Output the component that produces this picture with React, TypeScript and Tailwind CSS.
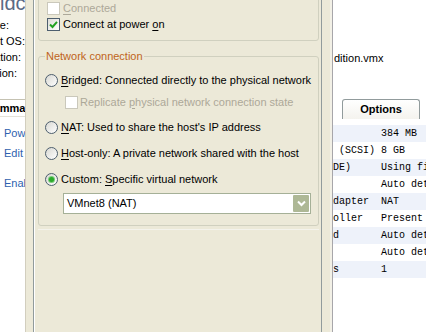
import React from "react";

const font = { fontFamily: "Tahoma, 'Liberation Sans', Arial, sans-serif" };

function Check({ checked = false, disabled = false }: { checked?: boolean; disabled?: boolean }) {
  return (
    <span
      className={
        "flex h-[13px] w-[13px] shrink-0 items-center justify-center border " +
        (disabled ? "border-[#CAC8BB] bg-white" : "border-[#4D5E6E] bg-gradient-to-br from-[#DCDCD7] to-white")
      }
    >
      {checked && (
        <svg width="9" height="9" viewBox="0 0 9 9">
          <path d="M1 4.5 L3.5 7 L8 1.8" fill="none" stroke="#21A121" strokeWidth="2" />
        </svg>
      )}
    </span>
  );
}

function Radio({ checked = false }: { checked?: boolean }) {
  return (
    <span className="flex h-[13px] w-[13px] shrink-0 items-center justify-center rounded-full border border-[#4D5E6E] bg-gradient-to-br from-[#D8D8D2] to-white">
      {checked && <span className="h-[5px] w-[5px] rounded-full bg-[#2BAA2B] shadow-[0_0_0_1px_#7ACB7A]" />}
    </span>
  );
}

function U({ children }: { children: React.ReactNode }) {
  return <span className="underline underline-offset-2">{children}</span>;
}

const rows = [
  ["Memory", "384 MB"],
  ["Hard Disk (SCSI)", "8 GB"],
  ["CD-ROM (IDE)", "Using file"],
  ["Floppy", "Auto detect"],
  ["Network Adapter", "NAT"],
  ["USB Controller", "Present"],
  ["Sound Card", "Auto detect"],
  ["Display", "Auto detect"],
  ["Processors", "1"],
];

export default function App() {
  return (
    <div className="flex h-[332px] w-[426px] overflow-hidden bg-white text-[11px] text-black" style={font}>
      {/* main window, left side */}
      <div className="w-[25px] shrink-0 overflow-hidden bg-white">
        <div className="mt-[-7px] h-[20px] whitespace-nowrap text-[20px] leading-[20px] text-[#5B6B86]">idc</div>
        <div className="mt-[4px] flex flex-col">
          <div className="flex h-[16px] w-[9px] items-center justify-end overflow-hidden whitespace-nowrap">State:</div>
          <div className="flex h-[16px] w-[25px] items-center justify-end overflow-hidden whitespace-nowrap">Guest OS:</div>
          <div className="flex h-[16px] w-[21px] items-center justify-end overflow-hidden whitespace-nowrap">Location:</div>
          <div className="flex h-[16px] w-[17px] items-center justify-end overflow-hidden whitespace-nowrap">Version:</div>
        </div>
        <div className="mt-[18px] flex h-[18px] items-center border-y border-t-[#C5C2B2] border-b-[#E4E2D8]">
          <span className="ml-[-15px] whitespace-nowrap font-bold">Commands</span>
        </div>
        <div className="flex flex-col pl-[4px] text-[#2E5FAE]">
          <div className="mt-[9px] h-[14px] whitespace-nowrap leading-[14px]">Power on this virtual machine</div>
          <div className="mt-[6px] h-[14px] whitespace-nowrap leading-[14px]">Edit virtual machine settings</div>
          <div className="mt-[16px] h-[14px] whitespace-nowrap leading-[14px]">Enable shared folders</div>
        </div>
      </div>

      {/* dialog */}
      <div className="flex w-[307px] shrink-0 border-l border-[#D2CEBE] bg-[#ECE9D8] pl-[7px]">
        <div className="w-[289px] shrink-0 border-x border-[#919B9C] shadow-[inset_1px_0_0_#FFFFFF] pl-[4px]">
          {/* device status */}
          <div className="mt-[-30px] w-[281px] rounded-[3px] border border-[#D0D0BF] pb-[8px] pl-[8px] pt-[29px]">
            <div className="flex h-[16px] items-center gap-[3px] text-[#ACA899]">
              <Check disabled />
              <span>
                <U>C</U>onnected
              </span>
            </div>
            <div className="flex h-[16px] items-center gap-[3px]">
              <Check checked />
              <span>
                Connect at power <U>o</U>n
              </span>
            </div>
          </div>

          {/* network connection */}
          <div className="relative mt-[15px] w-[281px] rounded-[3px] border border-[#D0D0BF] pb-[11px] pl-[6px] pt-[15px]">
            <span className="absolute left-[6px] top-[-8px] bg-[#ECE9D8] px-[1px] leading-[14px] text-[#BF6420]">
              Network connection
            </span>
            <div className="flex h-[16px] items-center gap-[3px]">
              <Radio />
              <span className="whitespace-nowrap">
                <U>B</U>ridged: Connected directly to the physical network
              </span>
            </div>
            <div className="mt-[6px] flex h-[16px] items-center gap-[2px] pl-[20px] text-[#ACA899]">
              <Check disabled />
              <span className="whitespace-nowrap">
                Replicate <U>p</U>hysical network connection state
              </span>
            </div>
            <div className="mt-[9px] flex h-[16px] items-center gap-[3px]">
              <Radio />
              <span className="whitespace-nowrap">
                <U>N</U>AT: Used to share the host's IP address
              </span>
            </div>
            <div className="mt-[10px] flex h-[16px] items-center gap-[3px]">
              <Radio />
              <span className="whitespace-nowrap">
                <U>H</U>ost-only: A private network shared with the host
              </span>
            </div>
            <div className="mt-[10px] flex h-[16px] items-center gap-[3px]">
              <Radio checked />
              <span className="whitespace-nowrap">
                Custom: <U>S</U>pecific virtual network
              </span>
            </div>
            <div className="ml-[18px] mt-[6px] flex h-[21px] w-[248px] items-center justify-between border border-[#A5B097] bg-white pl-[3px] pr-[1px]">
              <span>VMnet8 (NAT)</span>
              <span className="flex h-[17px] w-[16px] items-center justify-center rounded-[1px] bg-[#AEB896]">
                <svg width="9" height="7" viewBox="0 0 9 7">
                  <path d="M1 1.5 L4.5 5 L8 1.5" fill="none" stroke="#FFFFFF" strokeWidth="2" />
                </svg>
              </span>
            </div>
          </div>
          <div className="mt-[3px] h-px w-[281px] bg-[#F4F3EC]" />
        </div>
        <div className="w-[10px] shrink-0 border-r-2 border-[#F2F0E6]" />
      </div>

      {/* main window, right side */}
      <div className="min-w-0 flex-1 overflow-hidden border-l border-[#A7A6AA] bg-white">
        <div className="mt-[51px] h-[14px] whitespace-nowrap pl-[1px] leading-[14px]">dition.vmx</div>
        <div className="ml-[9px] mt-[34px] flex h-[20px] w-[78px] items-center justify-center rounded-t-[3px] border border-b-0 border-[#919B9C] bg-gradient-to-b from-white to-[#F4F3EE] font-bold">
          Options
        </div>
        <div className="mt-[6px] ml-[-54px]" style={{ fontFamily: "'Liberation Mono', 'Courier New', monospace" }}>
          {rows.map(([k, v], i) => (
            <div
              key={k}
              className={"flex h-[17px] items-center whitespace-nowrap text-[10px] " + (i % 2 === 0 ? "bg-[#EEF2FA]" : "bg-white")}
            >
              <span className="w-[102px] shrink-0">{k}</span>
              <span>{v}</span>
            </div>
          ))}
        </div>
      </div>
    </div>
  );
}
